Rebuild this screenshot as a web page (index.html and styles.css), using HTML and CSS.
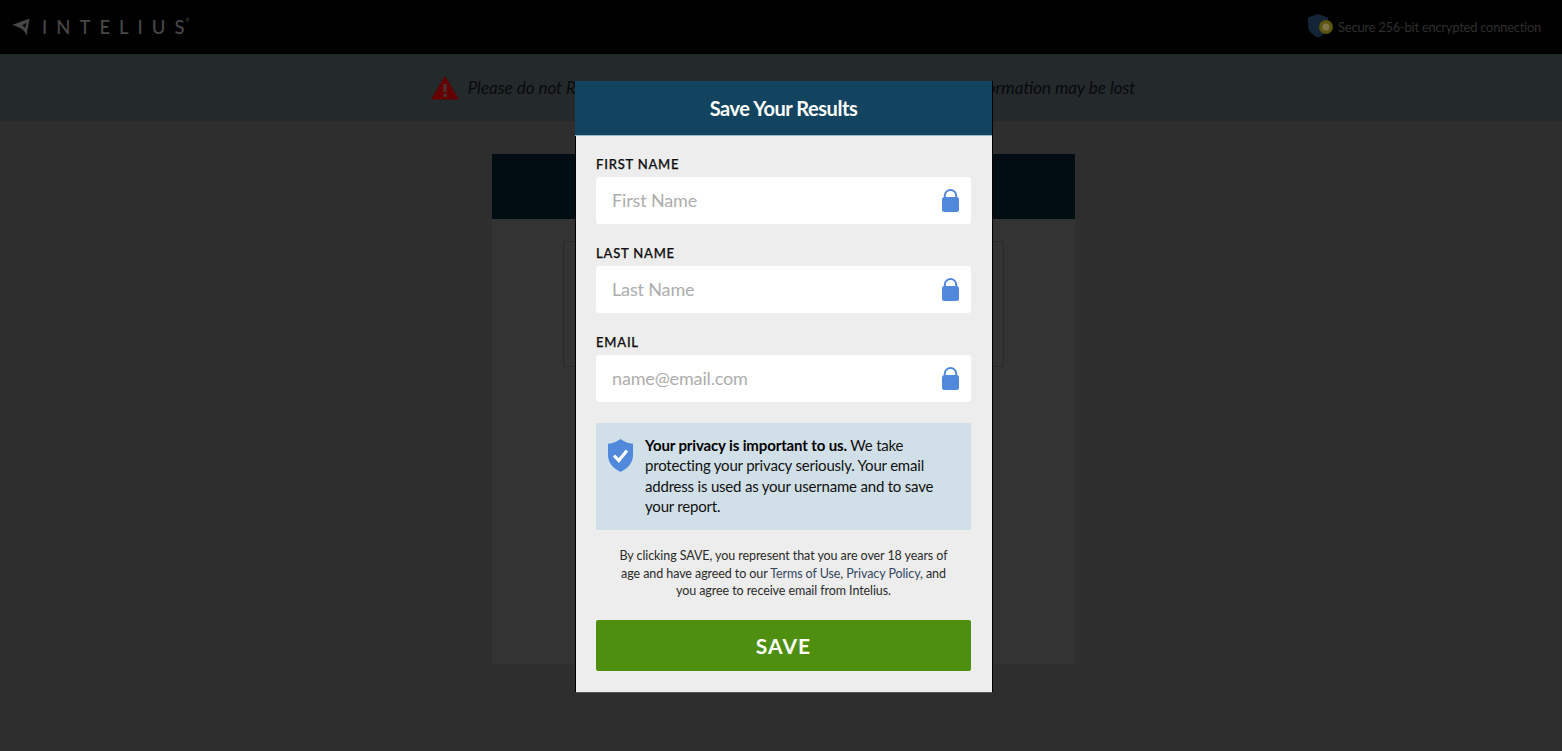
FILE: index.html
```html
<!DOCTYPE html>
<html lang="en">
<head>
<meta charset="utf-8">
<title>Intelius - Save Your Results</title>
<link rel="stylesheet" href="styles.css">
</head>
<body>
<header class="topbar">
  <div class="brand">
    <svg class="brand-icon" viewBox="0 0 18 19" width="18" height="19"><path d="M0 7 17.500.5 14.400 18.500C13.800 15.500 12.600 13 10.500 11.500 7.800 9.500 4 8 0 7Z" fill="#474747"/><path d="M10 7.200 14.400 4.800 13.200 10.500C12.500 9 11.400 8 10 7.200Z" fill="#0a0a0a"/></svg>
    <span class="brand-name">INTELIU<span class="brand-last">S</span></span><span class="brand-mark">®</span>
  </div>
  <div class="secure">
    <svg class="secure-icon" viewBox="0 0 26 24" width="26" height="24"><path d="M0 3.500 10 0l10 3.500v8C20 17 16 21 10 23.500 4 21 0 17 0 11.500Z" fill="#122436"/><circle cx="18" cy="13" r="7" fill="#5c5410"/><circle cx="18" cy="13" r="3.500" fill="#7d7648"/></svg>
    <span>Secure 256-bit encrypted connection</span>
  </div>
</header>
<div class="notice">
  <svg class="notice-icon" viewBox="0 0 28 24" width="28" height="24"><path d="M14 0 28 23.500H0Z" fill="#640000"/><rect x="12.300" y="8" width="3.400" height="8" fill="#4a3030"/><rect x="12.300" y="17.500" width="3.400" height="3.400" fill="#4a3030"/></svg>
  <em>Please do not Refresh or Close this Window until it has finished, or your information may be lost</em>
</div>
<main class="backdrop">
  <section class="card">
    <div class="card-head"></div>
    <div class="card-body"><div class="card-box"></div></div>
  </section>
</main>

<div class="modal">
  <h1 class="modal-title">Save Your Results</h1>
  <form class="modal-body">
    <div class="field">
      <label class="field-label">FIRST NAME</label>
      <div class="input"><span class="placeholder">First Name</span>
        <svg class="lock" viewBox="0 0 17 23" width="17" height="23"><path d="M2.800 10V6.500a5.700 5.500 0 0 1 11.400 0V10" fill="none" stroke="#5088dc" stroke-width="2"/><rect y="8" width="17" height="15" rx="2.500" fill="#5088dc"/></svg>
      </div>
    </div>
    <div class="field">
      <label class="field-label">LAST NAME</label>
      <div class="input"><span class="placeholder">Last Name</span>
        <svg class="lock" viewBox="0 0 17 23" width="17" height="23"><path d="M2.800 10V6.500a5.700 5.500 0 0 1 11.400 0V10" fill="none" stroke="#5088dc" stroke-width="2"/><rect y="8" width="17" height="15" rx="2.500" fill="#5088dc"/></svg>
      </div>
    </div>
    <div class="field">
      <label class="field-label">EMAIL</label>
      <div class="input"><span class="placeholder">name@email.com</span>
        <svg class="lock" viewBox="0 0 17 23" width="17" height="23"><path d="M2.800 10V6.500a5.700 5.500 0 0 1 11.400 0V10" fill="none" stroke="#5088dc" stroke-width="2"/><rect y="8" width="17" height="15" rx="2.500" fill="#5088dc"/></svg>
      </div>
    </div>
    <div class="privacy">
      <svg class="shield" viewBox="0 0 25 33" width="25" height="33"><path d="M12.500 0C16 2.800 20 4.300 25 4.700V16C25 24 19.500 29.500 12.500 33 5.500 29.500 0 24 0 16V4.700C5 4.300 9 2.800 12.500 0Z" fill="#5088dc"/><path d="M6 16.500 10.800 21.500 19 11.500" fill="none" stroke="#fff" stroke-width="3.200"/></svg>
      <p><strong>Your privacy is important to us.</strong> We take protecting your privacy seriously. Your email address is used as your username and to save your report.</p>
    </div>
    <p class="terms">By clicking SAVE, you represent that you are over 18 years of age and have agreed to our <a href="#">Terms of Use</a>, <a href="#">Privacy Policy</a>, and you agree to receive email from Intelius.</p>
    <button class="save" type="button">SAVE</button>
  </form>
</div>
</body>
</html>
```
FILE: styles.css
```css
* { box-sizing: border-box; }
html, body { margin: 0; height: 751px; overflow: hidden; }
body { background: #2e2e2e; font-family: Lato, "Open Sans", sans-serif; color: #000; }

.topbar { height: 54px; background: #000; display: flex; align-items: center; justify-content: space-between; padding: 0 21px 0 12px; }
.brand { display: flex; align-items: center; color: #474747; }
.brand-icon { display: block; margin-top: 1px; }
.brand-name { font-size: 18.500px; font-weight: 500; letter-spacing: 9px; margin-left: 12px; line-height: 20px; }
.brand-last { letter-spacing: 0; }
.brand-mark { font-size: 5px; margin-left: 1px; align-self: flex-start; }
.secure { display: flex; align-items: center; font-size: 13px; letter-spacing: -.27px; color: #2f2f2f; }
.secure-icon { margin-right: 4px; margin-top: -3px; }

.notice { height: 67px; background: #24292c; display: flex; align-items: center; justify-content: center; padding-left: 4px; font-size: 17px; color: #090a0b; }
.notice-icon { margin-right: 9px; }

.backdrop { display: flex; justify-content: center; padding: 33px 0 0 5px; }
.card { width: 583px; height: 510px; background: #333; }
.card-head { height: 65px; background: #020d13; }
.card-body { padding: 22px 71px 0; }
.card-box { height: 126px; border: 1px solid #272a2a; }

.modal { position: absolute; left: 575px; top: 81px; width: 418px; height: 612px; background: #ededed; border: 1px solid #000; border-top: 0; border-bottom-color: #555; }
.modal-title { margin: 0 0 0 -1px; height: 55px; background: #12445f; border-bottom: 1px solid #9fb6c4; color: #fff; font-size: 20px; font-weight: 700; line-height: 54px; text-align: center; letter-spacing: -.45px; }
.modal-body { padding: 20px 21px 0 20px; }

.field { height: 89px; }
.field-label { display: block; font-size: 13px; font-weight: 500; letter-spacing: .8px; -webkit-text-stroke: .25px #0c0c0c; line-height: 17px; color: #0c0c0c; margin-bottom: 4px; }
.input { height: 47px; background: #fff; border-radius: 3px; display: flex; align-items: center; justify-content: space-between; padding: 0 12px 2px 16px; }
.placeholder { font-size: 18px; letter-spacing: -.15px; color: #adadad; }
.lock { margin-top: 2px; }

.privacy { height: 107px; background: #d1e0e8; display: flex; padding: 12px 20px 0 12px; }
.shield { flex: none; margin: 4px 12px 0 0; }
.privacy p { margin: 0; font-size: 15px; letter-spacing: -.2px; line-height: 20.400px; color: #111; }
.privacy strong { font-weight: 700; color: #000; letter-spacing: -.13px; }

.terms { margin: 17px 0 0; padding: 0 18px; font-size: 12.500px; letter-spacing: -.08px; line-height: 17.700px; text-align: center; color: #2a2a2a; }
.terms a { color: #33475f; text-decoration: none; }

.save { display: block; width: 100%; height: 51px; margin-top: 20px; padding: 0; border: 0; border-radius: 2px; background: #4f8f0f; color: #fff; font: 700 21px Lato, sans-serif; letter-spacing: 1px; }
```
